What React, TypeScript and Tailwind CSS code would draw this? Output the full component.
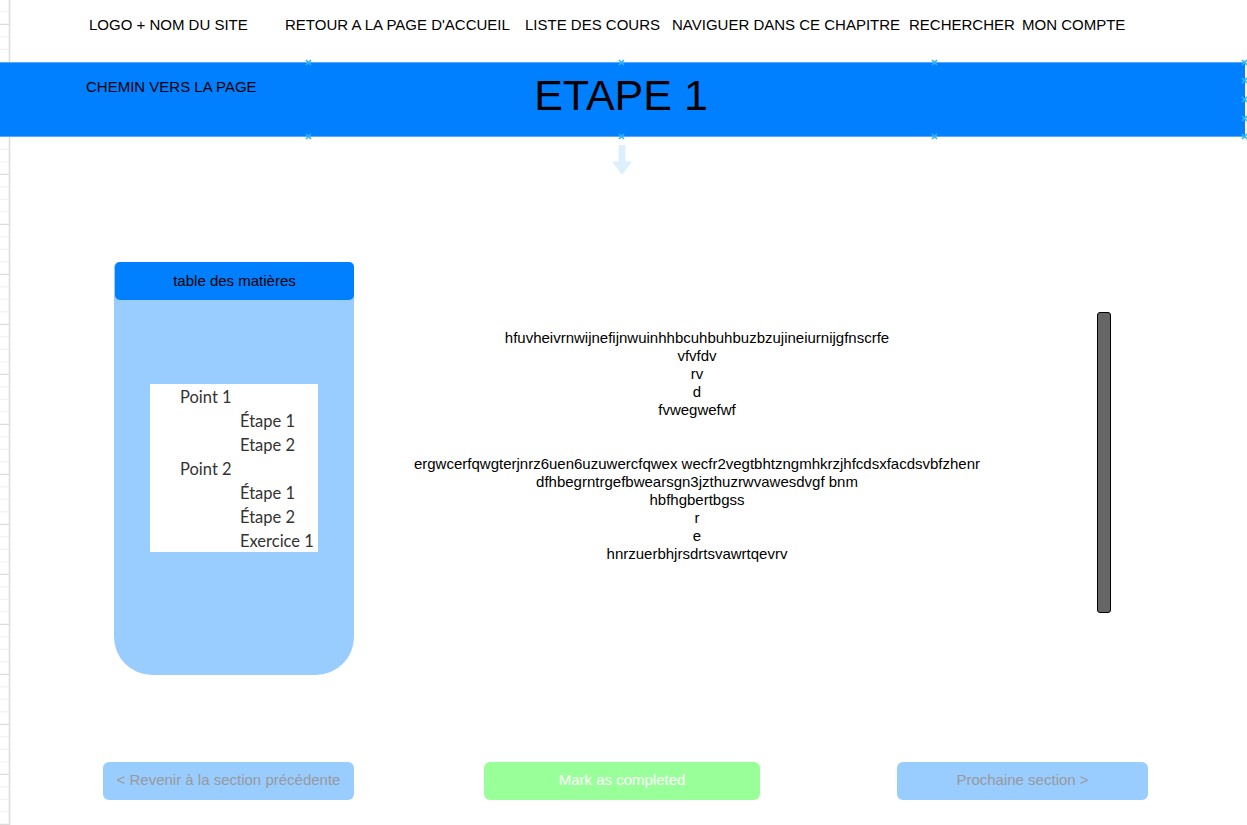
import React from 'react';

const NAV = [
  { label: 'LOGO + NOM DU SITE', w: 'w-[196px]' },
  { label: "RETOUR A LA PAGE D'ACCUEIL", w: 'w-[240px]' },
  { label: 'LISTE DES COURS', w: 'w-[147px]' },
  { label: 'NAVIGUER DANS CE CHAPITRE', w: 'w-[237px]' },
  { label: 'RECHERCHER', w: 'w-[113px]' },
  { label: 'MON COMPTE', w: 'w-auto' },
];

const TOC = [
  { label: 'Point 1', sub: false },
  { label: 'Étape 1', sub: true },
  { label: 'Etape 2', sub: true },
  { label: 'Point 2', sub: false },
  { label: 'Étape 1', sub: true },
  { label: 'Étape 2', sub: true },
  { label: 'Exercice 1', sub: true },
];

const TEXT = [
  'hfuvheivrnwijnefijnwuinhhbcuhbuhbuzbzujineiurnijgfnscrfe',
  'vfvfdv',
  'rv',
  'd',
  'fvwegwefwf',
  '',
  '',
  'ergwcerfqwgterjnrz6uen6uzuwercfqwex wecfr2vegtbhtzngmhkrzjhfcdsxfacdsvbfzhenr',
  'dfhbegrntrgefbwearsgn3jzthuzrwvawesdvgf bnm',
  'hbfhgbertbgss',
  'r',
  'e',
  'hnrzuerbhjrsdrtsvawrtqevrv',
];

// petites poignées de sélection (draw.io)
function Handle({ className }: { className: string }) {
  return (
    <svg className={`absolute w-[7px] h-[7px] ${className}`} viewBox="0 0 7 7">
      <path d="M1 1L6 6M6 1L1 6" stroke="#29b6f2" strokeWidth="1.6" />
    </svg>
  );
}

function GridStrip() {
  const lines = [];
  for (let k = 0; k < 67; k++) {
    const y = 11.8 + k * 12.5;
    lines.push(
      <line key={k} x1="0" x2="9" y1={y} y2={y} stroke={k % 4 === 1 ? '#d4d4d4' : '#efefef'} strokeWidth="1" />
    );
  }
  return (
    <svg className="absolute left-0 top-0 w-[11px] h-[825px]" viewBox="0 0 11 825">
      {lines}
      <line x1="9.5" x2="9.5" y1="0" y2="825" stroke="#dcdcdc" strokeWidth="1.5" />
    </svg>
  );
}

export default function App() {
  return (
    <div className="relative w-[1247px] h-[825px] overflow-hidden bg-white text-black font-['Liberation_Sans',Arial,sans-serif]">
      <GridStrip />

      {/* barre de navigation */}
      <nav className="relative h-[62px] flex pl-[89px] pt-[17px] text-[15px] leading-none whitespace-nowrap">
        {NAV.map((n) => (
          <span key={n.label} className={`${n.w} shrink-0`}>{n.label}</span>
        ))}
      </nav>

      {/* bandeau */}
      <div className="relative w-[1245px] h-[75px] bg-[#007fff] border-y border-[#5aa9ff] grid grid-cols-[1fr_auto_1fr]">
        <div className="pl-[86px] pt-[16px] text-[15px] leading-none whitespace-nowrap">CHEMIN VERS LA PAGE</div>
        <div className="pt-[11px] pr-[3px] text-[43px] leading-none whitespace-nowrap">ETAPE 1</div>
        <div />
        <Handle className="left-[305px] top-[-4px]" />
        <Handle className="left-[618px] top-[-4px]" />
        <Handle className="left-[931px] top-[-4px]" />
        <Handle className="left-[1241px] top-[-4px]" />
        <Handle className="left-[1241px] top-[14px]" />
        <Handle className="left-[1241px] top-[33px]" />
        <Handle className="left-[1241px] top-[52px]" />
        <Handle className="left-[305px] bottom-[-4px]" />
        <Handle className="left-[618px] bottom-[-4px]" />
        <Handle className="left-[931px] bottom-[-4px]" />
        <Handle className="left-[1241px] bottom-[-4px]" />
      </div>

      {/* flèche */}
      <div className="h-[125px] pl-[612px] pt-[8px]">
        <svg className="w-[20px] h-[30px]" viewBox="0 0 20 30">
          <path d="M6.5 0H13.5V16.5H20L10 30L0 16.5H6.5Z" fill="#dcf0fb" />
        </svg>
      </div>

      {/* contenu principal */}
      <div className="flex items-start">
        <aside className="ml-[114px] w-[240px] h-[413px] shrink-0 bg-[#99ccff] rounded-t-[5px] rounded-b-[38px] flex flex-col">
          <div className="ml-px h-[38px] bg-[#007fff] rounded-[5px] flex items-center justify-center text-[15px]">
            table des matières
          </div>
          <div className="mt-[84px] ml-[36px] w-[168px] bg-white font-['Lato','Open_Sans',sans-serif] text-[16.5px] text-[#333]">
            {TOC.map((t, i) => (
              <div key={i} className={`h-[24px] pt-[2px] flex items-center ${t.sub ? 'pl-[90px]' : 'pl-[30px]'}`}>
                {t.label}
              </div>
            ))}
          </div>
        </aside>

        <div className="w-[686px] shrink-0 mt-[67px] text-center text-[15px] leading-[18px]">
          {TEXT.map((l, i) => (
            <div key={i} className="h-[18px] whitespace-nowrap">{l}</div>
          ))}
        </div>

        <div className="ml-[57px] mt-[50px] w-[14px] h-[301px] bg-[#666] border border-black rounded-[3px]" />
      </div>

      {/* boutons */}
      <div className="flex mt-[87px] text-[15px]">
        <button className="ml-[103px] w-[251px] h-[38px] pb-px rounded-[6px] bg-[#99ccff] text-[#999]">
          &lt; Revenir à la section précédente
        </button>
        <button className="ml-[130px] w-[276px] h-[38px] pb-px rounded-[6px] bg-[#99ff99] text-white">
          Mark as completed
        </button>
        <button className="ml-[137px] w-[251px] h-[38px] pb-px rounded-[6px] bg-[#99ccff] text-[#999]">
          Prochaine section &gt;
        </button>
      </div>
    </div>
  );
}
